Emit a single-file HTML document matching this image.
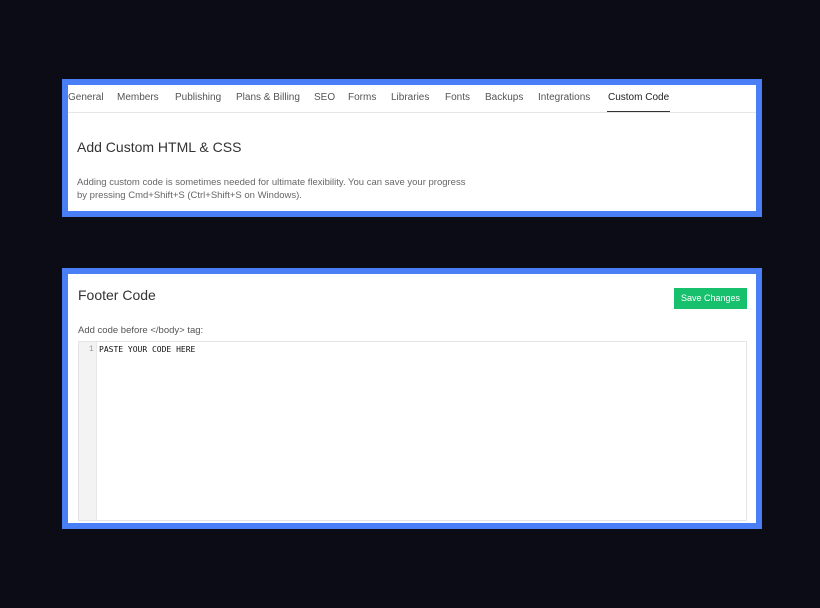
<!DOCTYPE html>
<html><head><style>
body{margin:0;width:820px;height:608px;background:#0b0c16;font-family:"Liberation Sans",sans-serif;position:relative;overflow:hidden}
.box{position:absolute;left:62px;width:688px;border:6px solid #4a7ef6;background:#fff}
.tabs{position:absolute;top:0;left:0;right:0;height:27px;border-bottom:1px solid #e6e6e6;font-size:10px;color:#555}
.tabs span{position:absolute;top:7px;white-space:nowrap}
.t{position:absolute;color:#333}
</style></head><body>
<div class="box" style="top:79px;height:126px">
 <div class="tabs">
  <span style="left:0">General</span><span style="left:49px">Members</span><span style="left:107px">Publishing</span><span style="left:168px">Plans &amp; Billing</span><span style="left:246px">SEO</span><span style="left:280px">Forms</span><span style="left:323px">Libraries</span><span style="left:377px">Fonts</span><span style="left:417px">Backups</span><span style="left:470px">Integrations</span><span style="left:540px;color:#222">Custom Code</span>
  <div style="position:absolute;left:539px;width:63px;top:26px;height:1px;background:#333"></div>
 </div>
 <div class="t" style="left:9px;top:54px;font-size:14px">Add Custom HTML &amp; CSS</div>
 <div class="t" style="left:9px;top:91px;font-size:9.5px;line-height:13px;color:#666">Adding custom code is sometimes needed for ultimate flexibility. You can save your progress<br>by pressing Cmd+Shift+S (Ctrl+Shift+S on Windows).</div>
</div>
<div class="box" style="top:268px;height:249px">
 <div class="t" style="left:10px;top:13px;font-size:14px">Footer Code</div>
 <div style="position:absolute;left:606px;top:14px;width:73px;height:21px;background:#17c06c;color:#fff;font-size:9px;line-height:21px;text-align:center">Save Changes</div>
 <div class="t" style="left:10px;top:51px;font-size:9.5px;color:#555">Add code before &lt;/body&gt; tag:</div>
 <div style="position:absolute;left:10px;top:67px;width:667px;height:178px;border:1px solid #e4e4e4">
  <div style="position:absolute;left:0;top:0;width:17px;height:100%;background:#f3f3f3;border-right:1px solid #e8e8e8"></div>
  <div style="position:absolute;left:10px;top:3px;font-family:'Liberation Mono',monospace;font-size:8px;color:#999">1</div>
  <div style="position:absolute;left:20px;top:3px;font-family:'DejaVu Sans Mono',monospace;font-size:8px;color:#111">PASTE YOUR CODE HERE</div>
 </div>
</div>
</body></html>
